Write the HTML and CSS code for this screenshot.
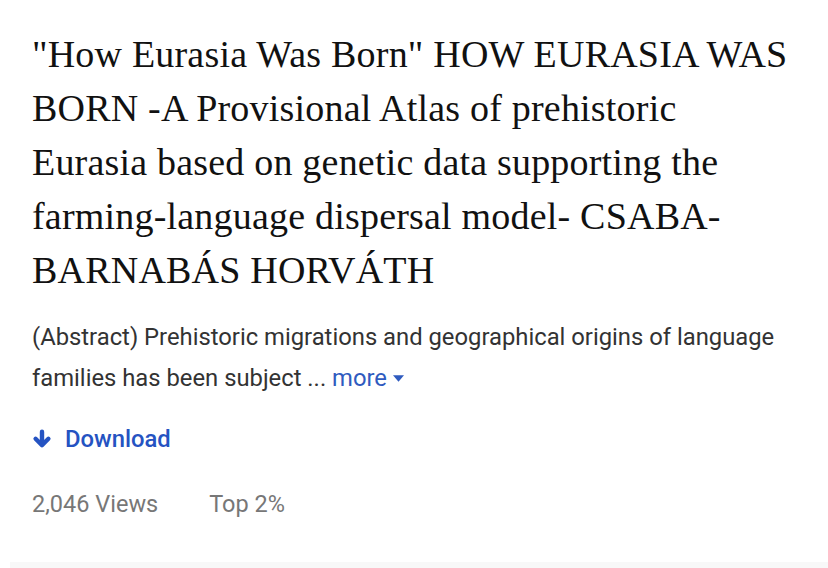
FILE: index.html
```html
<!DOCTYPE html>
<html>
<head>
<meta charset="utf-8">
<link rel="stylesheet" href="styles.css">
</head>
<body>
<div class="card">
  <h1 class="title">"How Eurasia Was Born" HOW EURASIA WAS<br>BORN -A Provisional Atlas of prehistoric<br>Eurasia based on genetic data supporting the<br>farming-language dispersal model- CSABA-<br>BARNABÁS HORVÁTH</h1>
  <p class="abstract">(Abstract) Prehistoric migrations and geographical origins of language families has been subject ... <span class="more">more<svg class="caret" viewBox="0 0 10 6" width="11" height="7"><path d="M0 0H10L5 6Z" fill="currentColor"/></svg></span></p>
  <div class="download">
    <svg class="dl-icon" viewBox="0 0 20 20" width="20" height="20"><path d="M10 2.8V15.5M3.6 9.8L10 16.2L16.4 9.8" fill="none" stroke="currentColor" stroke-width="4.4" stroke-linecap="round" stroke-linejoin="round"/></svg>
    <span>Download</span>
  </div>
  <div class="stats">
    <span>2,046 Views</span>
    <span>Top 2%</span>
  </div>
</div>
<div class="bottom"></div>
</body>
</html>
```
FILE: styles.css
```css
html, body {
  margin: 0;
  padding: 0;
  background: #fff;
}
.card {
  padding: 27px 32px 0 32px;
  width: 764px;
  height: 535px;
}
.title {
  margin: 0;
  font-family: "Liberation Serif", "Times New Roman", serif;
  font-weight: normal;
  font-size: 38px;
  letter-spacing: 0.2px;
  line-height: 54px;
  white-space: nowrap;
  color: #111;
}
.abstract {
  margin: 20px 0 0 0;
  font-family: Roboto, "Liberation Sans", sans-serif;
  font-size: 23.8px;
  line-height: 41px;
  color: #333;
}
.more {
  color: #2f5bbf;
}
.caret {
  margin-left: 6px;
  vertical-align: 4px;
}
.download {
  margin-top: 26px;
  display: flex;
  align-items: center;
  gap: 13px;
  font-family: Roboto, "Liberation Sans", sans-serif;
  font-size: 23.8px;
  font-weight: 500;
  color: #2553c2;
}
.dl-icon {
  color: #2553c2;
}
.stats {
  margin-top: 37px;
  display: flex;
  gap: 51px;
  font-family: Roboto, "Liberation Sans", sans-serif;
  font-size: 23.5px;
  color: #777;
}
.bottom {
  height: 6px;
  margin-left: 10px;
  background: #f8f8f8;
}
```
